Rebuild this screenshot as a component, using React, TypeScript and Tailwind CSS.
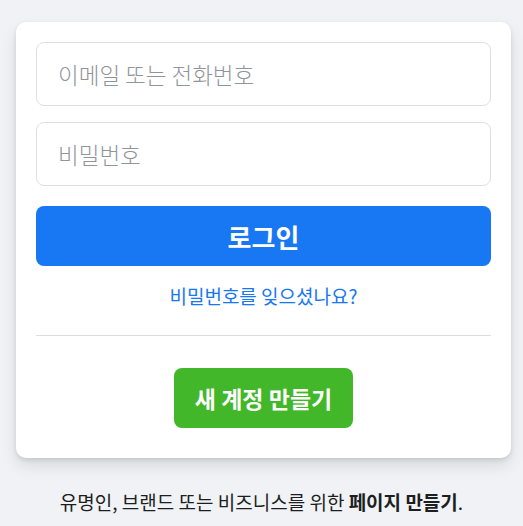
import React from 'react';

export default function App() {
  return (
    <div
      className="min-h-[526px] bg-[#f0f2f5] pt-[22px]"
      style={{ fontFamily: '"Noto Sans CJK KR", "Noto Sans", sans-serif' }}
    >
      <div className="mx-4 w-[495px] rounded-[10px] bg-white px-5 pt-5 pb-[30px] shadow-[0_2px_4px_rgba(0,0,0,0.1),0_8px_16px_rgba(0,0,0,0.1)]">
        <input
          type="text"
          placeholder="이메일 또는 전화번호"
          className="block h-16 w-full rounded-[8px] border border-[#dddfe2] px-[21px] text-[22.5px] font-light text-[#1c1e21] outline-none placeholder:text-[#90949c]"
        />
        <input
          type="password"
          placeholder="비밀번호"
          className="mt-4 block h-16 w-full rounded-[8px] border border-[#dddfe2] px-[21px] text-[22.5px] font-light text-[#1c1e21] outline-none placeholder:text-[#90949c]"
        />
        <button className="mt-5 flex h-[60px] w-full items-center justify-center rounded-[8px] bg-[#1877f2] text-[26px] font-bold text-white">
          로그인
        </button>
        <div className="mt-4 flex h-7 items-center justify-center">
          <a className="text-[19px] text-[#1877f2]">비밀번호를 잊으셨나요?</a>
        </div>
        <div className="mt-[25px] border-t border-[#dadde1]" />
        <div className="mt-8 flex justify-center">
          <button className="flex h-[60px] w-[179px] items-center justify-center rounded-[8px] bg-[#42b72a] text-[23px] font-bold text-white">
            새 계정 만들기
          </button>
        </div>
      </div>
      <p className="mt-8 text-center text-[19px] leading-6 text-[#1c1e21]">
        유명인, 브랜드 또는 비즈니스를 위한 <span className="font-bold">페이지 만들기</span>.
      </p>
    </div>
  );
}
